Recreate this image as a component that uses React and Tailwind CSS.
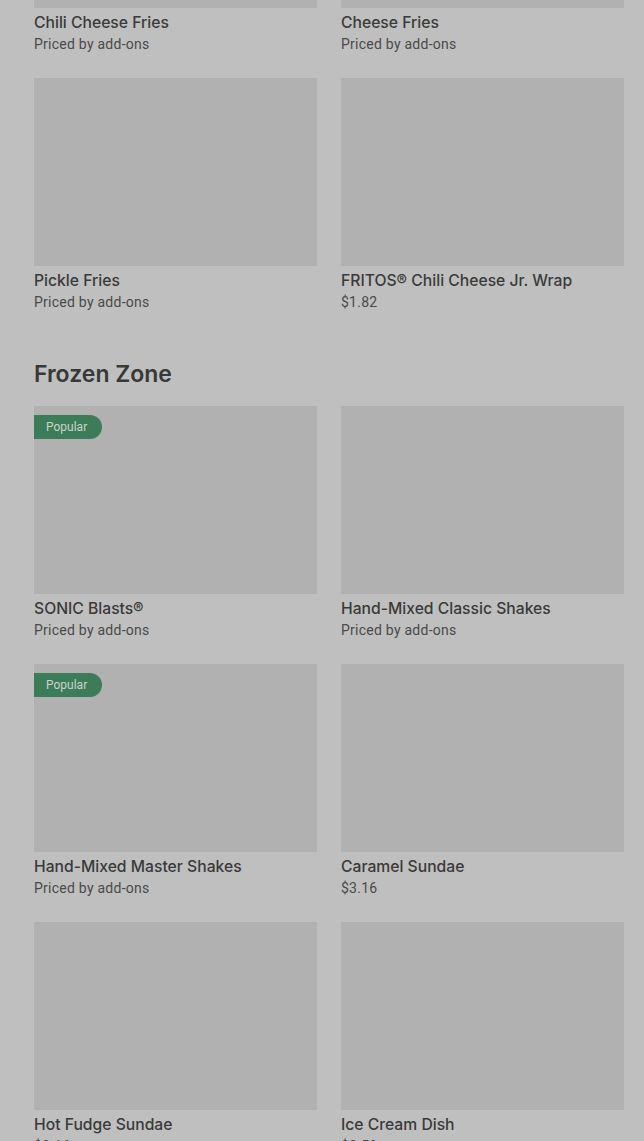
const fries = [
  { name: 'Chili Cheese Fries', price: 'Priced by add-ons' },
  { name: 'Cheese Fries', price: 'Priced by add-ons' },
  { name: 'Pickle Fries', price: 'Priced by add-ons' },
  { name: 'FRITOS® Chili Cheese Jr. Wrap', price: '$1.82' },
]

const frozen = [
  { name: 'SONIC Blasts®', price: 'Priced by add-ons', popular: true },
  { name: 'Hand-Mixed Classic Shakes', price: 'Priced by add-ons' },
  { name: 'Hand-Mixed Master Shakes', price: 'Priced by add-ons', popular: true },
  { name: 'Caramel Sundae', price: '$3.16' },
  { name: 'Hot Fudge Sundae', price: '$3.16' },
  { name: 'Ice Cream Dish', price: '$2.50' },
]

function ItemCard({ item }) {
  return (
    <div>
      <div className="relative h-[188px] bg-[#b1b1b1]">
        {item.popular && (
          <span className="absolute left-0 top-[9px] h-6 pl-3 pr-[15px] rounded-r-full bg-[#3d7c59] text-[#c5d6cb] text-[12px] leading-6">
            Popular
          </span>
        )}
      </div>
      <div
        className="mt-[3px] text-[15.7px] leading-6 font-medium text-[#3a3a3a]"
        style={{ fontFamily: 'Inter, "Liberation Sans", sans-serif' }}
      >
        {item.name}
      </div>
      <div className="-mt-[1px] text-[14px] leading-5 tracking-[0.25px] text-[#4a4a4a]">{item.price}</div>
    </div>
  )
}

export default function App() {
  return (
    <div
      className="h-[1141px] overflow-hidden bg-[#bfbfbf]"
      style={{ fontFamily: 'Roboto, "Liberation Sans", sans-serif' }}
    >
      <div className="-mt-[180px] pl-[34px] pr-[20px]">
        <div className="grid grid-cols-2 gap-x-6 gap-y-6">
          {fries.map(item => (
            <ItemCard key={item.name} item={item} />
          ))}
        </div>

        {/* Frozen Zone */}
        <h2
          className="mt-[46px] mb-4 text-[23px] leading-8 font-semibold text-[#383838]"
          style={{ fontFamily: 'Inter, "Liberation Sans", sans-serif' }}
        >
          Frozen Zone
        </h2>
        <div className="grid grid-cols-2 gap-x-6 gap-y-6">
          {frozen.map(item => (
            <ItemCard key={item.name} item={item} />
          ))}
        </div>
      </div>
    </div>
  )
}
